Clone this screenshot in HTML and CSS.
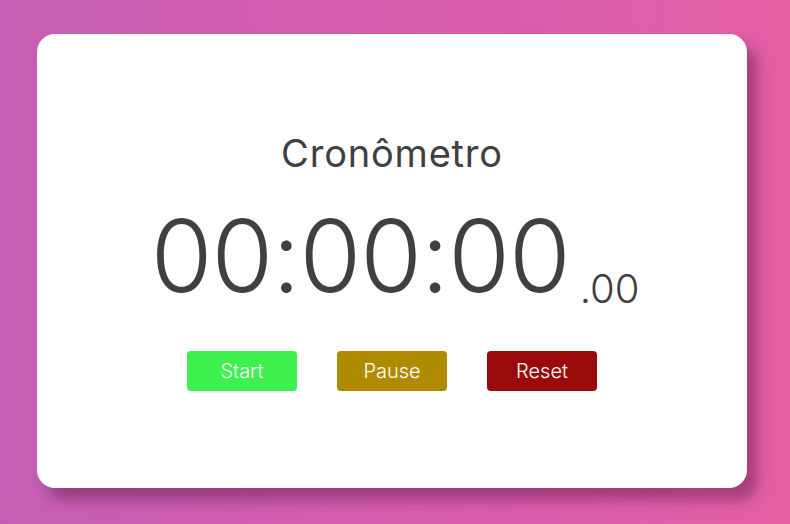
FILE: index.html
```html
<!DOCTYPE html>
<html lang="pt">
<head>
<meta charset="utf-8">
<title>Cronômetro</title>
<link rel="stylesheet" href="styles.css">
</head>
<body>
<main class="card">
  <h1 class="title">Cronômetro</h1>
  <div class="time"><span class="main">00:00:00</span><span class="ms">.00</span></div>
  <div class="buttons">
    <button class="btn start">Start</button>
    <button class="btn pause">Pause</button>
    <button class="btn reset">Reset</button>
  </div>
</main>
</body>
</html>
```
FILE: styles.css
```css
* { box-sizing: border-box; }
html, body { height: 100%; }
body {
  margin: 0;
  background: linear-gradient(90deg, #c55fb5 0%, #d75dad 50%, #e35fa4 100%);
  font-family: Inter, "Noto Sans", sans-serif;
  color: #404040;
  padding: 34px 43px 36px 37px;
}
.card {
  width: 710px;
  height: 454px;
  background: #fff;
  border-radius: 18px;
  box-shadow: 10px 12px 14px rgba(90, 20, 70, 0.45);
  display: flex;
  flex-direction: column;
  align-items: center;
  padding-top: 96px;
}
.title {
  margin: 0;
  font-weight: 400;
  font-size: 38px;
  line-height: 46px;
  letter-spacing: 0.8px;
}
.time {
  margin-top: 20px;
  display: flex;
  align-items: baseline;
  height: 120px;
  padding-left: 6px;
}
.main {
  font-size: 100px;
  font-weight: 300;
  line-height: 120px;
  letter-spacing: -1px;
}
.ms {
  font-size: 40px;
  font-weight: 300;
  margin-left: 10px;
  position: relative;
  top: 11px;
}
.buttons {
  margin-top: 35px;
  display: flex;
  gap: 40px;
}
.btn {
  width: 110px;
  height: 40px;
  border: none;
  border-radius: 4px;
  color: #fff;
  font-family: Inter, "Noto Sans", sans-serif;
  font-size: 20px;
  font-weight: 300;
  cursor: pointer;
}
.start { background: #3ef14f; }
.pause { background: #b08a00; }
.reset { background: #9a0a0a; }
```
